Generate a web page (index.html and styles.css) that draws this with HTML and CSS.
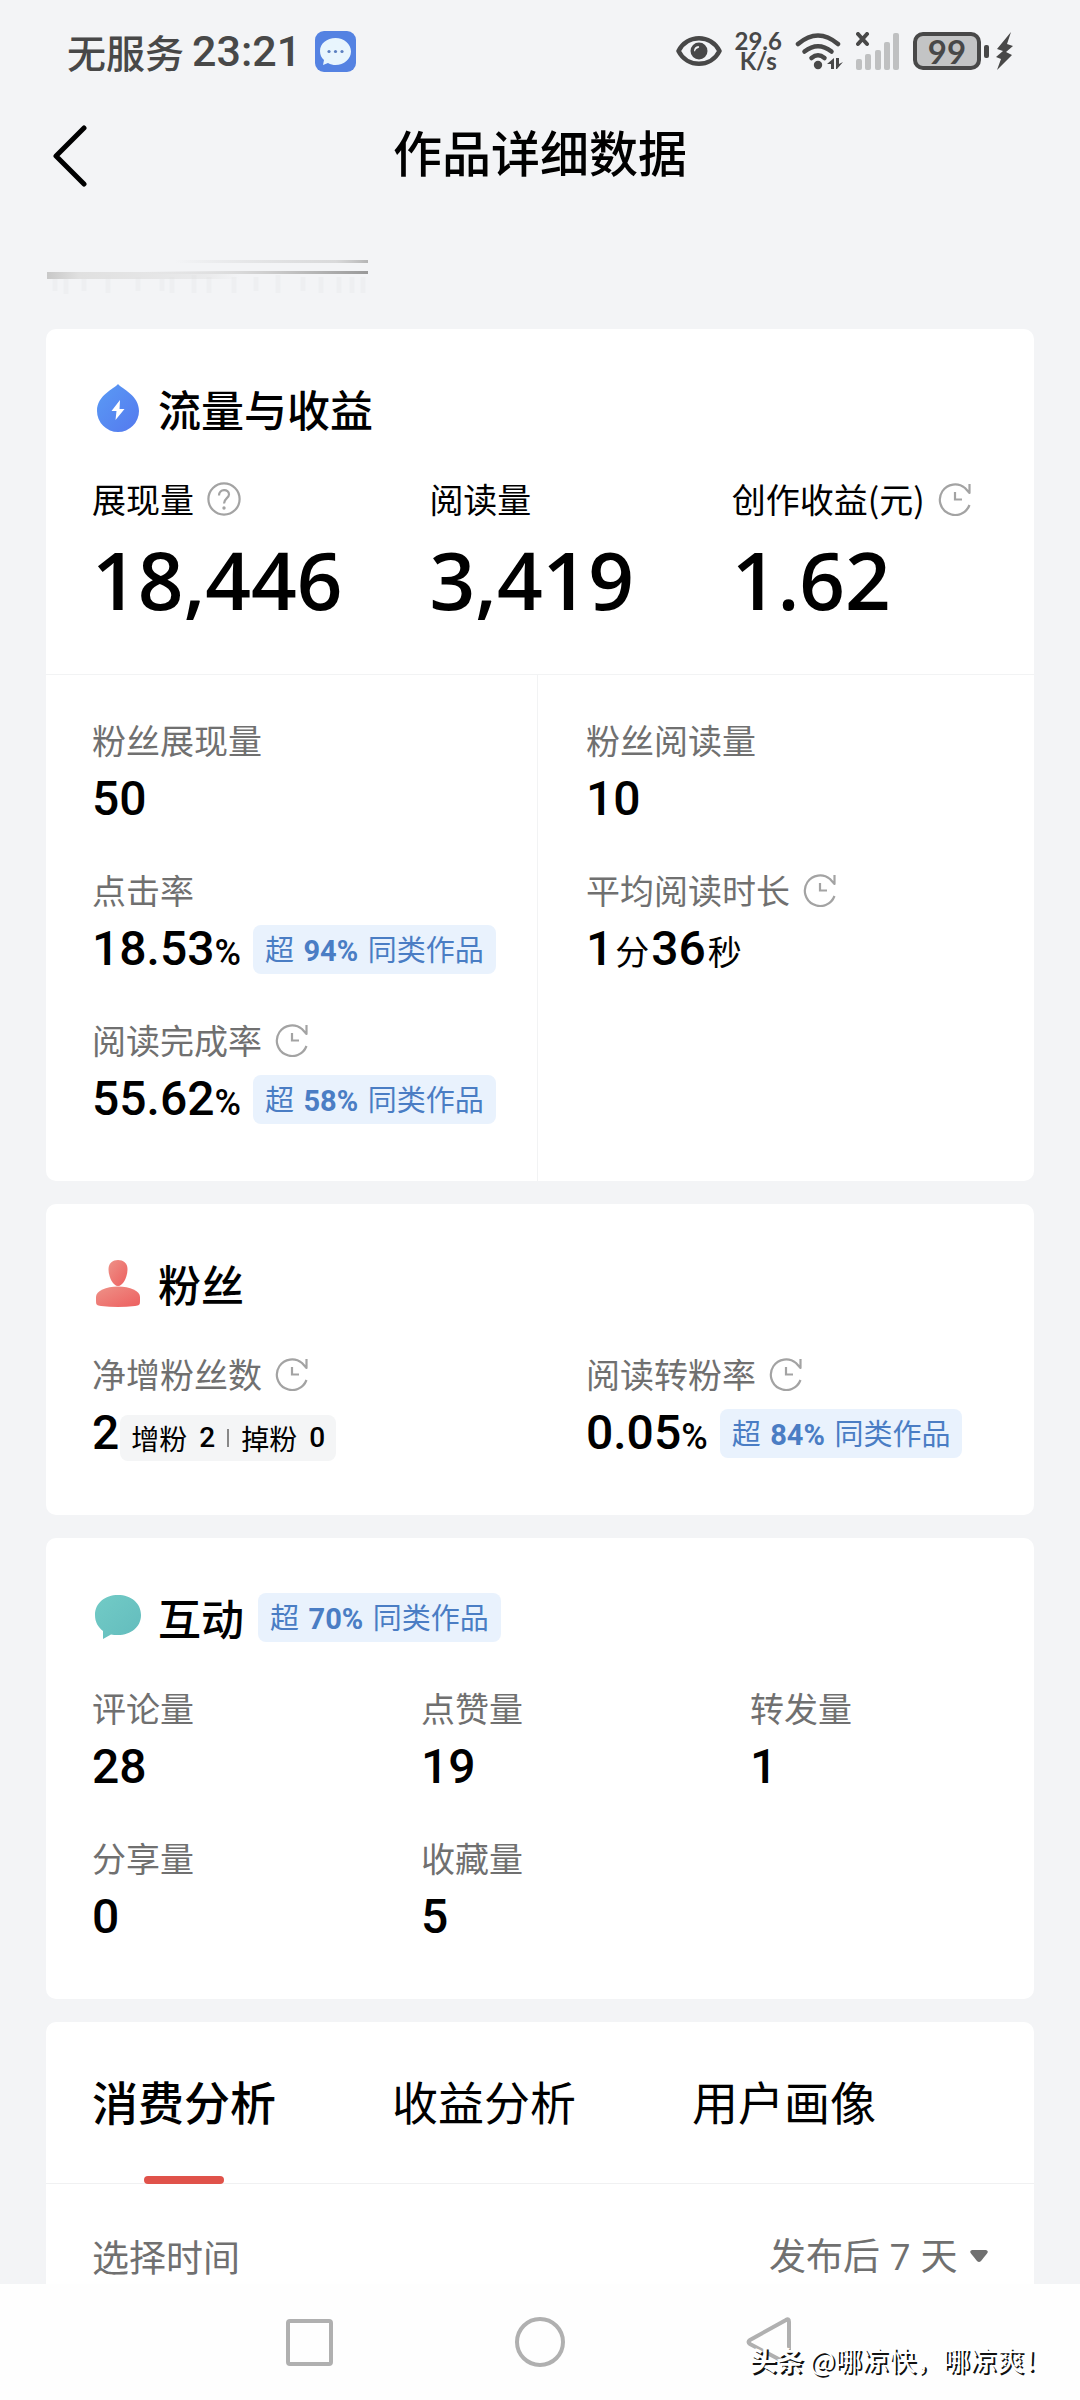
FILE: index.html
```
<!DOCTYPE html>
<html lang="zh-CN">
<head>
	<title>作品详细数据</title>
	<meta charset="utf-8">
	<meta name="viewport" content="width=device-width">
	<link rel="stylesheet" href="styles.css">
</head>
<body>
<!-- 公用图标 -->
<svg class="defs" width="0" height="0">
	<symbol id="clock" viewBox="0 0 34 34">
		<path d="M31.500 2V11L27 6A15.300 15.300 0 1 0 31.500 23" fill="none" stroke="#a3a3a3" stroke-width="2.200" stroke-linejoin="round"/>
		<path d="M17 10V17.500H24" fill="none" stroke="#a3a3a3" stroke-width="2.200"/>
	</symbol>
	<symbol id="help" viewBox="0 0 34 34">
		<circle cx="17" cy="17" r="15.600" fill="none" stroke="#a3a3a3" stroke-width="2.200"/>
		<path d="M12 13.500C12 6.500 22 6.500 22 12.500C22 16 17 16.500 17 21.500" fill="none" stroke="#a3a3a3" stroke-width="2.200"/>
		<circle cx="17" cy="26" r="1.700" fill="#a3a3a3"/>
	</symbol>
</svg>

<div class="status">
	<span class="carrier">无服务</span>
	<span class="time">23:21</span>
	<svg class="msg" width="41" height="41" viewBox="0 0 41 41">
		<rect width="41" height="41" rx="9" fill="#5482e2"/>
		<path d="M20.500 7C12 7 5 12.500 5 20c0 4 1.500 7 4 9l-1 5 5-2c2.500 1.500 5 2 7.500 2C29 34 36 28 36 20.500S29 7 20.500 7z" fill="#e8f5fd"/>
		<g fill="#5b7fc0"><circle cx="14" cy="20.500" r="1.600"/><circle cx="20.500" cy="20.500" r="1.600"/><circle cx="27" cy="20.500" r="1.600"/></g>
	</svg>
	<div class="status-right">
		<svg width="46" height="32" viewBox="0 0 46 32">
			<path d="M2.500 16C11-1 35-1 43.500 16C35 33 11 33 2.500 16z" fill="none" stroke="#484848" stroke-width="4.500" stroke-linejoin="round"/>
			<circle cx="23" cy="16" r="8.500" fill="#484848"/>
			<path d="M18 16q0-4.500 4.500-5q1.500 1 0 2q-3 .5-3.500 3.500z" fill="#f3f4f6"/>
		</svg>
		<div class="speed"><span>29.6</span><span>K/s</span></div>
		<svg width="48" height="38" viewBox="0 0 48 38">
			<g fill="none" stroke="#484848" stroke-width="4.500" stroke-linecap="round">
				<path d="M3 12Q23-5 43 12"/><path d="M9.500 19.500Q23 9 36.500 19.500"/><path d="M16.500 26Q23 20.500 29.500 26"/>
			</g>
			<circle cx="23" cy="33" r="4.200" fill="#484848"/>
			<path d="M39 26v11h-3v-5h-4zM41 26h3v6l4-2-6 7h-1z" fill="#484848"/>
		</svg>
		<svg width="44" height="38" viewBox="0 0 44 38">
			<path d="M2 2l9 10M11 2L2 12" stroke="#484848" stroke-width="4" stroke-linecap="round"/>
			<g fill="#bfc0c1"><rect y="27" width="6" height="11" rx="2"/><rect x="9" y="22" width="6" height="16" rx="2"/><rect x="19" y="18" width="6" height="20" rx="2"/><rect x="28" y="10" width="6" height="28" rx="2"/><rect x="37" y="1" width="6" height="37" rx="2"/></g>
		</svg>
		<div class="battery">99</div>
		<svg class="charge" width="29" height="38" viewBox="0 0 29 38">
			<rect y="13" width="5" height="13" rx="2" fill="#484848"/>
			<path d="M27 0L13 17l6 2-7 6 5 2-4 11L28 23l-6-3 7-6-6-2z" fill="#484848"/>
		</svg>
	</div>
</div>

<header class="header">
	<button class="back" aria-label="返回">
		<svg width="34" height="62" viewBox="0 0 34 62"><path d="M31 3L3 31L31 59" fill="none" stroke="#000" stroke-width="5" stroke-linecap="round" stroke-linejoin="round"/></svg>
	</button>
	<h1>作品详细数据</h1>
</header>

<main class="main">
	<!-- 作品标题已抹去 -->
	<svg class="erased" width="322" height="38" viewBox="0 0 322 38">
		<defs>
			<linearGradient id="e1"><stop offset=".4" stop-color="#bbb" stop-opacity="0"/><stop offset=".9" stop-color="#c8c8c8" stop-opacity=".6"/><stop offset="1" stop-color="#b5b5b5"/></linearGradient>
			<linearGradient id="e2"><stop offset="0" stop-color="#c8c8c8"/><stop offset=".1" stop-color="#e0e0e0"/><stop offset=".5" stop-color="#ddd" stop-opacity=".4"/><stop offset=".6" stop-color="#ddd" stop-opacity="0"/></linearGradient>
			<linearGradient id="e3"><stop offset=".3" stop-color="#ddd" stop-opacity="0"/><stop offset=".7" stop-color="#ccc"/><stop offset="1" stop-color="#999"/></linearGradient>
		</defs>
		<path d="M9 22v12M20 22v15M38 22v12M62 18v18M92 20v14M116 22v12M126 20v16M148 18v18M163 20v16M188 20v16M210 20v14M232 18v18M257 20v14M275 20v16M293 20v16M306 20v16M317 20v16" stroke="#eeeff1" stroke-width="5"/>
		<rect x="1" y="3" width="321" height="3" fill="url(#e1)"/>
		<rect x="1" y="15" width="321" height="7" fill="url(#e2)"/>
		<rect x="1" y="14" width="321" height="3" fill="url(#e3)"/>
	</svg>

	<section class="card">
		<div class="card-body">
			<h2>
				<svg width="50" height="50" viewBox="0 0 50 50">
					<defs><linearGradient id="g1" x2="1" y2="1"><stop stop-color="#5a9bf5"/><stop offset="1" stop-color="#5479ee"/></linearGradient></defs>
					<path d="M26 1C30 6 47 12 47 28A21 21 0 0 1 5 28C5 12 22 6 26 1z" fill="url(#g1)"/>
					<path d="M28 17L19.500 28h5l-1 9L32.500 26h-5z" fill="#fff"/>
				</svg>
				流量与收益
			</h2>
			<div class="totals">
				<div>
					<div class="label dark">展现量<button class="tip" aria-label="说明"><svg><use href="#help"/></svg></button></div>
					<div class="big">18,446</div>
				</div>
				<div>
					<div class="label dark">阅读量</div>
					<div class="big">3,419</div>
				</div>
				<div>
					<div class="label dark">创作收益(元)<button class="tip" aria-label="更新时间"><svg><use href="#clock"/></svg></button></div>
					<div class="big">1.62</div>
				</div>
			</div>
		</div>
		<div class="split">
			<div class="col">
				<div class="item">
					<div class="label">粉丝展现量</div>
					<div class="value">50</div>
				</div>
				<div class="item">
					<div class="label">点击率</div>
					<div class="value">18.53<small>%</small><span class="badge">超 <b>94%</b> 同类作品</span></div>
				</div>
				<div class="item">
					<div class="label">阅读完成率<button class="tip" aria-label="更新时间"><svg><use href="#clock"/></svg></button></div>
					<div class="value">55.62<small>%</small><span class="badge">超 <b>58%</b> 同类作品</span></div>
				</div>
			</div>
			<div class="col">
				<div class="item">
					<div class="label">粉丝阅读量</div>
					<div class="value">10</div>
				</div>
				<div class="item">
					<div class="label">平均阅读时长<button class="tip" aria-label="更新时间"><svg><use href="#clock"/></svg></button></div>
					<div class="value">1<small class="unit">分</small>36<small class="unit">秒</small></div>
				</div>
			</div>
		</div>
	</section>

	<section class="card">
		<div class="card-body">
			<h2>
				<svg width="50" height="50" viewBox="0 0 50 50">
					<defs><linearGradient id="g2" x2="1" y2="1"><stop stop-color="#ee9288"/><stop offset="1" stop-color="#ed5f5f"/></linearGradient></defs>
					<path d="M26 2C31 2 35.500 5 35.500 11C35.500 19 31 28 26 28S16.500 19 16.500 11C16.500 5 21 2 26 2z" fill="url(#g2)"/>
					<path d="M26 28.500C38 28.500 48 33 48 39V43C48 47 47 47.500 43 48Q26 50 9 48C5 47.500 4 47 4 43V39C4 33 14 28.500 26 28.500z" fill="url(#g2)"/>
				</svg>
				粉丝
			</h2>
			<div class="half">
				<div>
					<div class="label">净增粉丝数<button class="tip" aria-label="更新时间"><svg><use href="#clock"/></svg></button></div>
					<div class="value">2<span class="change">增粉 <b>2</b><i></i>掉粉 <b>0</b></span></div>
				</div>
				<div>
					<div class="label">阅读转粉率<button class="tip" aria-label="更新时间"><svg><use href="#clock"/></svg></button></div>
					<div class="value">0.05<small>%</small><span class="badge">超 <b>84%</b> 同类作品</span></div>
				</div>
			</div>
		</div>
	</section>

	<section class="card">
		<div class="card-body">
			<h2>
				<svg width="50" height="50" viewBox="0 0 50 50">
					<defs><linearGradient id="g3" x2="1" y2="1"><stop stop-color="#72cbc6"/><stop offset="1" stop-color="#63bcbd"/></linearGradient></defs>
					<path d="M26 3C39 3 49 11 49 23S39 43 26 43C23 43 21 43 19 42.500L11 47V39C6 35 3 30 3 23C3 11 13 3 26 3z" fill="url(#g3)"/>
				</svg>
				互动<span class="badge">超 <b>70%</b> 同类作品</span>
			</h2>
			<div class="third">
				<div><div class="label">评论量</div><div class="value">28</div></div>
				<div><div class="label">点赞量</div><div class="value">19</div></div>
				<div><div class="label">转发量</div><div class="value">1</div></div>
				<div><div class="label">分享量</div><div class="value">0</div></div>
				<div><div class="label">收藏量</div><div class="value">5</div></div>
			</div>
		</div>
	</section>

	<section class="card last">
		<div class="tabs">
			<button class="tab active">消费分析</button>
			<button class="tab">收益分析</button>
			<button class="tab">用户画像</button>
		</div>
		<div class="filter">
			<label for="range">选择时间</label>
			<div class="picker">
				<select id="range"><option>发布后 7 天</option></select>
				<svg width="18" height="12" viewBox="0 0 18 12"><path d="M2 0H16Q19 1 17 3.500L11 11Q9 13 7 11L1 3.500Q-1 1 2 0z" fill="#707070"/></svg>
			</div>
		</div>
	</section>
</main>

<nav class="nav">
	<button aria-label="最近任务"><svg width="54" height="54" viewBox="0 0 54 54"><rect x="6" y="6" width="43" height="43" rx="2" fill="none" stroke="#b0b0b0" stroke-width="4"/></svg></button>
	<button aria-label="主页"><svg width="54" height="54" viewBox="0 0 54 54"><circle cx="27" cy="27" r="23" fill="none" stroke="#b0b0b0" stroke-width="4"/></svg></button>
	<button aria-label="后退"><svg width="54" height="54" viewBox="0 0 54 54"><path d="M42 5Q45 3 45 7V46Q45 50 42 48L6 29Q3 27 6 25z" fill="none" stroke="#b0b0b0" stroke-width="4"/></svg></button>
	<span class="mark"><b>头条</b> @哪凉快，哪凉爽！</span>
</nav>
</body>
</html>
```
FILE: styles.css
```
*{
	margin: 0;
	padding: 0;
	box-sizing: border-box;
}
body{
	display: flex;
	flex-direction: column;
	min-height: 100vh;
	background: #f3f4f6;
	color: #000;
	font-family: "Noto Sans CJK SC", sans-serif;
}
button,select{
	border: 0;
	background: none;
	color: inherit;
	font: inherit;
}
svg{
	display: block;
	flex: none;
}
.defs{
	position: absolute;
}

/*状态栏*/
.status{
	display: flex;
	align-items: center;
	height: 102px;
	padding: 0 67px;
	color: #484848;
}
.carrier{
	font-size: 39px;
	font-weight: 500;
	line-height: 44px;
}
.time{
	margin: 0 14px 0 8px;
	font: 500 43px Roboto, sans-serif;
}
.status-right{
	display: flex;
	align-items: center;
	gap: 13px;
	margin-left: auto;
}
.speed{
	display: flex;
	flex-direction: column;
	align-items: center;
	font: 700 24px/20px Lato, sans-serif;
}
.battery{
	width: 68px;
	height: 38px;
	border: 4px solid #484848;
	border-radius: 10px;
	background: #c3c4c5;
	font: 700 33px/30px Lato, sans-serif;
	text-align: center;
}
.charge{
	margin-left: -10px;
}

/*标题栏*/
.header{
	position: relative;
	height: 100px;
	text-align: center;
}
.header h1{
	font-size: 49px;
	font-weight: 500;
	line-height: 98px;
}
.back{
	position: absolute;
	left: 53px;
	top: 23px;
}

.main{
	flex: 1;
	padding: 0 46px;
}
.erased{
	margin: 55px 0 34px;
}
.card{
	margin-bottom: 23px;
	border-radius: 10px;
	background: #fff;
}
.card-body{
	padding: 50px 46px 45px;
}
.card h2{
	display: flex;
	align-items: center;
	gap: 16px;
	margin-bottom: 40px;
	font-size: 43px;
	font-weight: 500;
	line-height: 58px;
}
.label{
	display: flex;
	align-items: center;
	color: #707070;
	font-size: 34px;
	line-height: 44px;
	white-space: nowrap;
}
.dark{
	color: #000;
}
.tip{
	margin-left: 13px;
}
.tip svg{
	width: 34px;
	height: 34px;
}
.value{
	display: flex;
	align-items: baseline;
	font: 500 48px/74px Roboto, "Noto Sans CJK SC", sans-serif;
	white-space: nowrap;
}
.value small{
	font-size: 36px;
	line-height: 48px;
}
.value .unit{
	margin: 0 2px;
	font-size: 34px;
	font-weight: 400;
}
.badge,.change{
	align-self: center;
	margin-left: 12px;
	padding: 0 12px;
	border-radius: 8px;
	background: #e9f2fd;
	color: #4a7dc4;
	font: 400 29px/46px "Noto Sans CJK SC", sans-serif;
}
.badge b,.change b{
	font-family: Roboto, sans-serif;
	font-weight: 700;
}
.badge b{
	margin: 0 3px;
}
h2 .badge{
	margin-left: -2px;
}
.change{
	display: flex;
	align-items: center;
	gap: 12px;
	margin: 10px 0 0 1px;
	padding: 0 11px;
	background: #f4f5f6;
	color: #000;
	font-size: 28px;
}
.change b{
	font-weight: 500;
}
.change i{
	width: 2px;
	height: 18px;
	background: #888;
}

/*流量与收益*/
.card-body:not(:last-child){
	padding-bottom: 37px;
}
.totals{
	display: grid;
	grid-template-columns: 337fr 302fr 256fr;
}
.big{
	font: 600 80px/116px "Open Sans", sans-serif;
}
.split{
	display: grid;
	grid-template-columns: 491fr 497fr;
	border-top: 1px solid #f2f3f4;
}
.col{
	padding: 43px 0 45px 46px;
}
.col+.col{
	padding-left: 48px;
	border-left: 1px solid #f2f3f4;
}
.item+.item{
	margin-top: 32px;
}
.half{
	display: grid;
	grid-template-columns: 494fr 402fr;
}
.third{
	display: grid;
	grid-template-columns: 329fr 329fr 238fr;
	row-gap: 32px;
}

/*底部分析*/
.last{
	margin-bottom: 0;
	border-radius: 10px 10px 0 0;
}
.tabs{
	display: flex;
	gap: 116px;
	padding: 0 46px;
	border-bottom: 1px solid #f0f1f2;
}
.tab{
	position: relative;
	height: 161px;
	padding-bottom: 6px;
	font-size: 46px;
}
.active{
	font-weight: 500;
}
.active::after{
	content: "";
	position: absolute;
	left: 50%;
	bottom: -1px;
	width: 80px;
	height: 8px;
	margin-left: -40px;
	border-radius: 4px;
	background: #e0524a;
}
.filter{
	display: flex;
	justify-content: space-between;
	padding: 48px 46px 4px;
	color: #707070;
	font-size: 37px;
	line-height: 48px;
}
.picker{
	display: flex;
	align-items: center;
	gap: 12px;
}
.picker select{
	appearance: none;
	height: 48px;
	font-family: "Open Sans", "Noto Sans CJK SC", sans-serif;
}

/*导航键*/
.nav{
	position: relative;
	display: flex;
	justify-content: center;
	gap: 177px;
	height: 116px;
	padding-top: 31px;
	background: #fefefe;
}
.nav button{
	height: 54px;
}
.mark{
	position: absolute;
	right: 29px;
	bottom: 20px;
	color: #fff;
	font-size: 27px;
	line-height: 40px;
	text-shadow: 2px 2px 0 #111;
}
```
